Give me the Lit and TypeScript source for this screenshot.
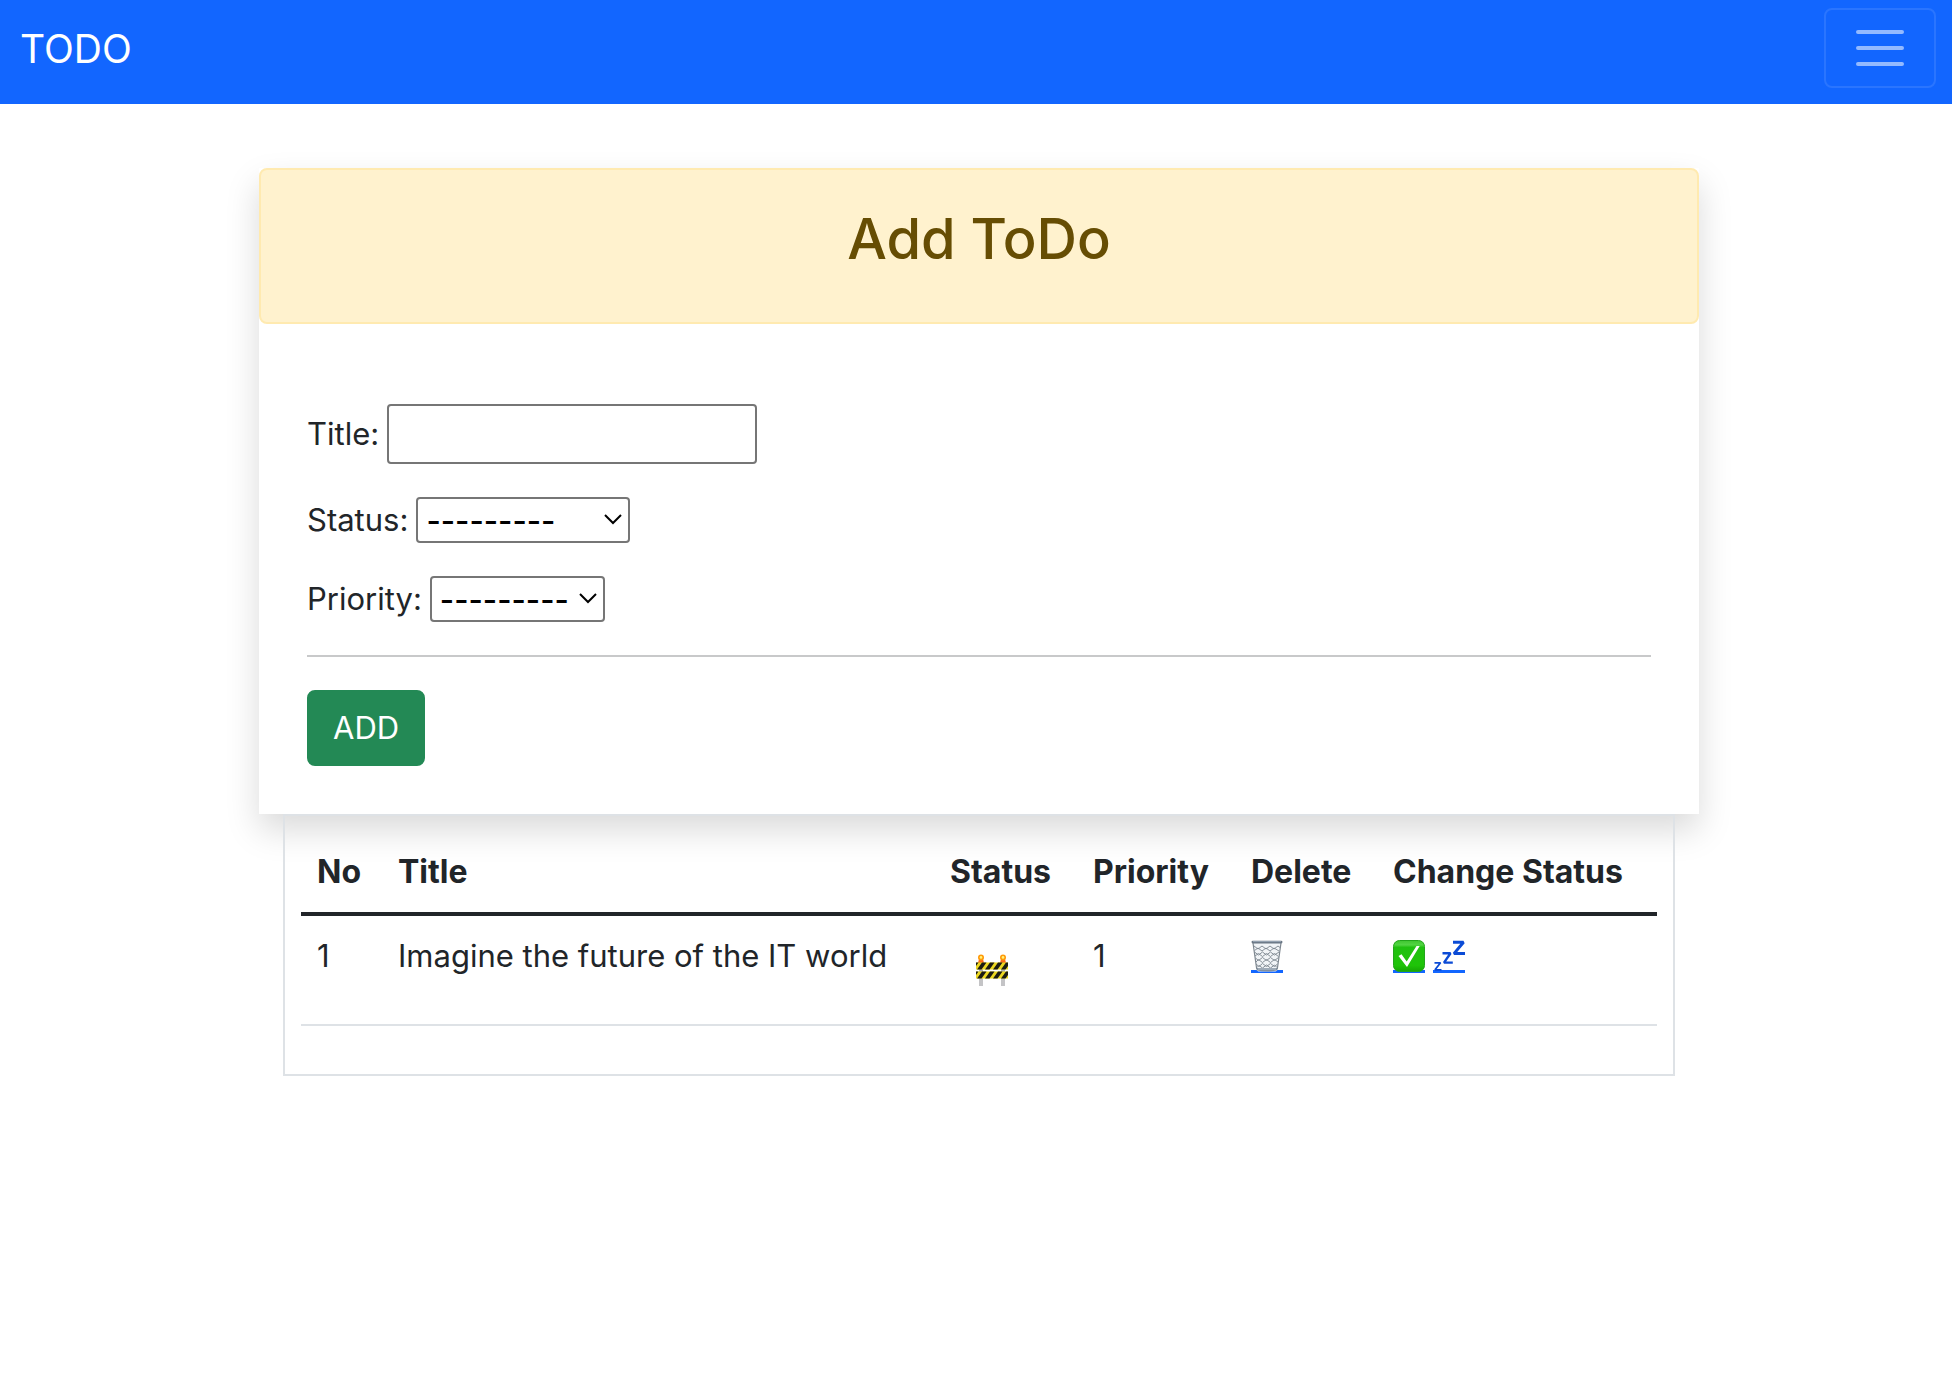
import { LitElement, html, css, svg } from "lit";
import { customElement } from "lit/decorators.js";

const shared = css`
  *,
  *::before,
  *::after {
    box-sizing: border-box;
  }
  .icon {
    display: block;
    width: 32px;
    height: 32px;
  }
`;

@customElement("todo-navbar")
class TodoNavbar extends LitElement {
  static styles = [
    shared,
    css`
      :host {
        display: block;
      }
      .navbar {
        display: flex;
        align-items: center;
        justify-content: space-between;
        padding: 8px 16px 16px 20px;
        background: #1266ff;
      }
      .brand {
        padding-top: 2px;
        color: #fff;
        font-size: 39px;
        line-height: 60px;
        text-decoration: none;
      }
      .toggler {
        padding: 8px 24px;
        border: 2px solid rgba(255, 255, 255, 0.1);
        border-radius: 8px;
        background: transparent;
      }
      .bars {
        display: block;
        width: 60px;
        height: 60px;
      }
    `,
  ];

  render() {
    return html`<nav class="navbar">
      <a class="brand" href="#">TODO</a>
      <button class="toggler" type="button" aria-label="Toggle navigation">
        <svg class="bars" viewBox="0 0 60 60" stroke="#fff" stroke-opacity="0.55" stroke-width="4" stroke-linecap="round">
          <path d="M8 14h44M8 30h44M8 46h44" />
        </svg>
      </button>
    </nav>`;
  }
}

@customElement("todo-form")
class TodoForm extends LitElement {
  static styles = [
    shared,
    css`
      :host {
        display: block;
        background: #fff;
        box-shadow: 0 16px 32px rgba(0, 0, 0, 0.15);
      }
      .banner {
        padding: 32px;
        border: 2px solid #ffeab0;
        border-radius: 8px;
        background: #fff2ce;
      }
      .heading {
        margin: 0 0 14px;
        color: #664d03;
        font-size: 56px;
        font-weight: 500;
        line-height: 74px;
        text-align: center;
      }
      .form {
        display: flex;
        flex-direction: column;
        padding: 80px 48px 48px;
      }
      .field {
        display: flex;
        align-items: center;
        gap: 8px;
        margin-bottom: 33px;
      }
      .field label {
        line-height: 46px;
      }
      .text {
        width: 370px;
        height: 60px;
        padding: 2px 8px;
        border: 2px solid #767676;
        border-radius: 4px;
        background: #fff;
        font: inherit;
        color: #000;
      }
      .picker {
        display: grid;
        align-items: center;
      }
      .picker > * {
        grid-area: 1 / 1;
      }
      .select {
        appearance: none;
        height: 46px;
        padding: 0 8px;
        border: 2px solid #767676;
        border-radius: 4px;
        background: #fff;
        color: #000;
        font-family: inherit;
        font-size: 31px;
        font-weight: 500;
      }
      .wide {
        width: 214px;
      }
      .narrow {
        width: 175px;
      }
      .chevron {
        justify-self: end;
        width: 18px;
        height: 12px;
        margin-right: 8px;
        pointer-events: none;
      }
      .rule {
        width: 100%;
        height: 2px;
        margin: 0 0 33px;
        border: 0;
        background: #c8c9ca;
      }
      .add {
        align-self: flex-start;
        padding: 12px 24px;
        border: 2px solid #238955;
        border-radius: 8px;
        background: #238955;
        color: #fff;
        font-family: inherit;
        font-size: 31px;
        line-height: 48px;
      }
    `,
  ];

  private picker(id: string, label: string, size: string) {
    return html`<div class="field">
      <label for=${id}>${label}:</label>
      <div class="picker">
        <select class="select ${size}" id=${id}>
          <option value="" selected>---------</option>
        </select>
        <svg class="chevron" viewBox="0 0 18 12" fill="none" stroke="#000" stroke-width="2">
          <path d="M1 1l8 8 8-8" />
        </svg>
      </div>
    </div>`;
  }

  render() {
    return html`
      <div class="banner"><h1 class="heading">Add ToDo</h1></div>
      <form class="form" @submit=${(e: Event) => e.preventDefault()}>
        <div class="field">
          <label for="title">Title:</label>
          <input class="text" id="title" type="text" />
        </div>
        ${this.picker("status", "Status", "wide")}
        ${this.picker("priority", "Priority", "narrow")}
        <hr class="rule" />
        <button class="add" type="submit">ADD</button>
      </form>
    `;
  }
}

const barrier = svg`
  <path d="M3 24h4v8H3zM25 24h4v8h-4z" fill="#c4c4c6"/>
  <path d="M3 14h4v4H3zM25 14h4v4h-4z" fill="#b4b4b6"/>
  <path d="M3 5h4l1 4H2zM25 5h4l1 4h-6z" fill="#ff6a1a"/>
  <circle cx="5" cy="3.4" r="3" fill="#ff9a0a"/><circle cx="27" cy="3.4" r="3" fill="#ff9a0a"/>
  <circle cx="5" cy="3.4" r="1.3" fill="#fff27a"/><circle cx="27" cy="3.4" r="1.3" fill="#fff27a"/>
  <path d="M0 8.5h32v7H0zM0 17.5h32v7H0z" fill="#ecd721"/>
  <path d="M0 8.5h2.5L0 12zM6 8.5h4.5l-5 7H1zM14 8.5h4.5l-5 7H9zM22 8.5h4.5l-5 7H17zM30 8.5h2v3.6l-2.500 3.400H25z
    M0 17.5h2.500L0 21zM6 17.5h4.500l-5 7H1zM14 17.5h4.500l-5 7H9zM22 17.5h4.500l-5 7H17zM30 17.5h2v3.600l-2.500 3.400H25z" fill="#1d1c14"/>`;

const basket = svg`
  <path d="M2 2h28l-3.500 27.500q-.2 1.700-2 2H7.500q-1.800-.3-2-2z" fill="#f1f4f7"/>
  <g fill="none" stroke="#7c868f" stroke-width="0.900">
    <path d="M3 6l4 3 4-3 4 3 4-3 4 3 4-3 2 1.500M3.500 10.500l3.500-2.500 4 3 4-3 4 3 4-3 5 3"/>
    <path d="M3.500 12l4 3 4-3 4 3 4-3 4 3 4.500-3M4 16l3.500-2.500 4 3 4-3 4 3 4-3 4 3"/>
    <path d="M4.500 18l3 2.500 4-3 4 3 4-3 4 3 4-3M5 22l2.500-2.500 4 3 4-3 4 3 4-3 3.500 2.500"/>
    <path d="M5 24l3 2.500 3.500-3 4 3 4-3 4 3 3-2.500M6 27.500l2-2 3.500 2.500 4-3 4 3 4-3 2.500 2.500"/>
  </g>
  <path d="M2 3l3.700 26M30 3l-3.700 26" fill="none" stroke="#7e8790" stroke-width="1.200"/>
  <path d="M5.300 28h21.400l-.5 2.500q-10.200 2-20.400 0z" fill="#83909e"/>
  <path d="M7 29h18" stroke="#b8c4d0" stroke-width="1"/>
  <rect x="0.500" y="0.700" width="31" height="2.800" rx="1.400" fill="#697684"/>
  <path d="M2 1.600h28" stroke="#a4b2c1" stroke-width="0.800"/>`;

const check = svg`
  <defs><linearGradient id="green" x1="0" y1="0" x2="0" y2="1">
    <stop offset="0" stop-color="#3fc52f"/><stop offset="0.140" stop-color="#52d443"/>
    <stop offset="0.220" stop-color="#20c010"/><stop offset="0.800" stop-color="#1fc408"/><stop offset="1" stop-color="#17a604"/>
  </linearGradient></defs>
  <rect x="0.500" y="0.500" width="31" height="31" rx="6" fill="url(#green)" stroke="#23a51c"/>
  <path d="M5.500 16l3-1.700 5.200 7.200L23.500 6h3.200L14 27z" fill="#fff"/>`;

const sleep = svg`
  <g fill="none" stroke="#0b4bd6" stroke-linejoin="bevel">
    <path d="M20 2.200h10.500L21 13.600h11" stroke-width="3"/>
    <path d="M9.500 13.200h8L11 22.600h8.800" stroke-width="2.400"/>
    <path d="M1.500 22.800h6L2 29.800h6.500" stroke-width="1.800"/>
  </g>`;

@customElement("todo-table")
class TodoTable extends LitElement {
  static styles = [
    shared,
    css`
      :host {
        display: block;
        margin: 0 24px;
        padding: 16px 16px 48px;
        border: 2px solid #dee2e6;
      }
      .table {
        width: 100%;
        table-layout: fixed;
        border-collapse: separate;
        border-spacing: 0;
      }
      th,
      td {
        padding: 16px;
        text-align: left;
        vertical-align: top;
        white-space: nowrap;
        line-height: 48px;
      }
      th {
        border-bottom: 4px solid #212529;
        font-weight: 700;
        font-size: 32px;
      }
      td {
        border-bottom: 2px solid #dee2e6;
      }
      .no {
        width: 81px;
      }
      .status {
        width: 143px;
      }
      .priority {
        width: 158px;
      }
      .delete {
        width: 142px;
      }
      .change {
        width: 280px;
      }
      .badge {
        display: flex;
        padding: 22px 26px;
      }
      .actions {
        display: flex;
        gap: 8px;
        padding-top: 8px;
      }
      .action {
        display: grid;
        height: 33px;
        background: linear-gradient(#1266ff, #1266ff) bottom / 100% 3px no-repeat;
      }
    `,
  ];

  private items = [{ title: "Imagine the future of the IT world", priority: 1 }];

  render() {
    return html`<table class="table">
      <thead>
        <tr>
          <th class="no">No</th>
          <th>Title</th>
          <th class="status">Status</th>
          <th class="priority">Priority</th>
          <th class="delete">Delete</th>
          <th class="change">Change Status</th>
        </tr>
      </thead>
      <tbody>
        ${this.items.map(
          (item, i) => html`<tr>
            <td>${i + 1}</td>
            <td>${item.title}</td>
            <td>
              <div class="badge"><svg class="icon" viewBox="0 0 32 32" role="img" aria-label="Pending">${barrier}</svg></div>
            </td>
            <td>${item.priority}</td>
            <td>
              <div class="actions">
                <a class="action" href="#" aria-label="Delete"><svg class="icon" viewBox="0 0 32 32">${basket}</svg></a>
              </div>
            </td>
            <td>
              <div class="actions">
                <a class="action" href="#" aria-label="Complete"><svg class="icon" viewBox="0 0 32 32">${check}</svg></a>
                <a class="action" href="#" aria-label="Pending"><svg class="icon" viewBox="0 0 32 32">${sleep}</svg></a>
              </div>
            </td>
          </tr>`
        )}
      </tbody>
    </table>`;
  }
}

@customElement("app-root")
class AppRoot extends LitElement {
  static styles = [
    shared,
    css`
      :host {
        display: block;
        min-height: 100vh;
        background: #fff;
        color: #212529;
        font-family: Inter, "Liberation Sans", sans-serif;
        font-size: 31px;
        line-height: 48px;
      }
      .page {
        max-width: 1446px;
        margin: 64px auto 0;
        padding-left: 6px;
      }
    `,
  ];

  render() {
    return html`
      <todo-navbar></todo-navbar>
      <main class="page">
        <todo-form></todo-form>
        <todo-table></todo-table>
      </main>
    `;
  }
}
